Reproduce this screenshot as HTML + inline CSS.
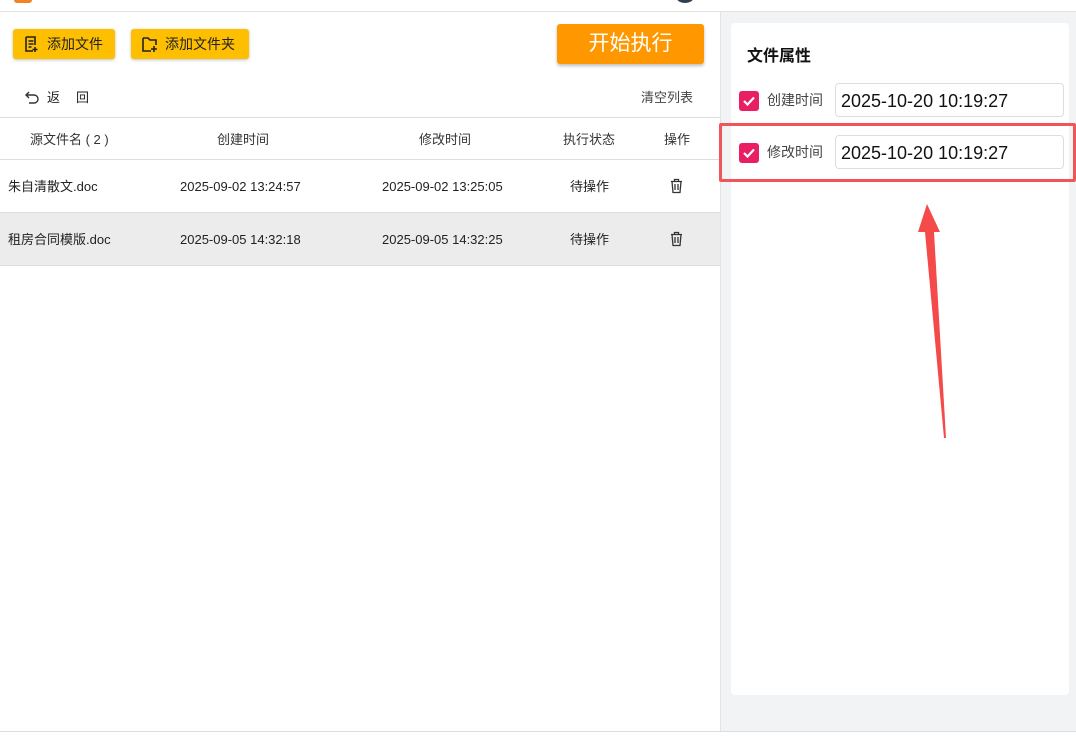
<!DOCTYPE html>
<html><head><meta charset="utf-8"><style>
*{margin:0;padding:0;box-sizing:border-box}
body{width:1076px;height:738px;background:#fff;position:relative;overflow:hidden;font-family:"Liberation Sans","Noto Sans CJK SC",sans-serif;color:#222}
.a{position:absolute;white-space:nowrap;line-height:17px}
.btn{position:absolute;background:#fdbf00;border-radius:3px;box-shadow:0 1px 3px rgba(0,0,0,.25);font-size:14px;color:#222;display:flex;align-items:center;line-height:17px}
.t{font-size:13px}
.hl{position:absolute;left:0;width:720px;height:1px;background:#ddd}
.cb{position:absolute;width:20px;height:20px;background:#e91e63;border-radius:3px}
.inp{position:absolute;left:835px;width:229px;height:34px;border:1px solid #ddd;border-radius:4px;font-size:18px;line-height:22px;padding:6px 0 0 5px;color:#111}
</style></head><body>
<div class="a" style="left:14px;top:-4px;width:18px;height:7px;background:#f58220;border-radius:3px"></div>
<div class="a" style="left:677px;top:-6px;width:16px;height:9px;background:#2c3e50;border-radius:50%"></div>
<div class="a" style="left:0;top:11px;width:1076px;height:1px;background:#e3e3e3"></div>

<div class="btn" style="left:13px;top:29px;width:102px;height:30px;padding-left:9px">
<svg width="18" height="18" viewBox="0 0 18 18" fill="none" stroke="#222" stroke-width="1.6"><path d="M4 2h9v8M4 2v14h7M6.5 6h5M6.5 9h5M6.5 12h3M13 12v5M10.5 14.5h5"/></svg><span style="margin-left:7px">添加文件</span></div>
<div class="btn" style="left:131px;top:29px;width:118px;height:30px;padding-left:10px">
<svg width="18" height="18" viewBox="0 0 18 18" fill="none" stroke="#222" stroke-width="1.6"><path d="M2 3h5l2 2h6v5M2 3v13h8M13 11v6M10 14h6"/></svg><span style="margin-left:6px">添加文件夹</span></div>

<div class="a" style="left:557px;top:24px;width:147px;height:40px;background:#ff9800;border-radius:3px;box-shadow:0 2px 3px rgba(0,0,0,.25);color:#fff;font-size:21px;text-align:center;line-height:40px">开始执行</div>

<svg class="a" style="left:24px;top:90px" width="16" height="16" viewBox="0 0 16 16" fill="none" stroke="#333" stroke-width="1.4"><path d="M5 2L2 5l3 3M2 5h8a4 4 0 010 8H5"/></svg>
<div class="a t" style="left:47px;top:89px">返</div>
<div class="a t" style="left:76px;top:89px">回</div>
<div class="a t" style="left:641px;top:89px;color:#444">清空列表</div>

<div class="hl" style="top:117px"></div>
<div class="a t" style="left:30px;top:131px;color:#333">源文件名 ( 2 )</div>
<div class="a t" style="left:217px;top:131px;color:#333">创建时间</div>
<div class="a t" style="left:419px;top:131px;color:#333">修改时间</div>
<div class="a t" style="left:563px;top:131px;color:#333">执行状态</div>
<div class="a t" style="left:664px;top:131px;color:#333">操作</div>
<div class="hl" style="top:159px"></div>

<div class="a t" style="left:8px;top:178px">朱自清散文.doc</div>
<div class="a t" style="left:180px;top:178px">2025-09-02 13:24:57</div>
<div class="a t" style="left:382px;top:178px">2025-09-02 13:25:05</div>
<div class="a t" style="left:570px;top:178px">待操作</div>
<svg class="a" style="left:669px;top:178px" width="15" height="16" viewBox="0 0 15 16" fill="none" stroke="#333" stroke-width="1.3"><path d="M2 3.5h11M5.5 3.5V1.5h4v2M3 3.5l1 11h7l1-11M6 6v6M9 6v6"/></svg>

<div class="a" style="left:0;top:212px;width:720px;height:54px;background:#ececec;border-top:1px solid #ddd;border-bottom:1px solid #ddd"></div>
<div class="a t" style="left:8px;top:231px">租房合同模版.doc</div>
<div class="a t" style="left:180px;top:231px">2025-09-05 14:32:18</div>
<div class="a t" style="left:382px;top:231px">2025-09-05 14:32:25</div>
<div class="a t" style="left:570px;top:231px">待操作</div>
<svg class="a" style="left:669px;top:231px" width="15" height="16" viewBox="0 0 15 16" fill="none" stroke="#333" stroke-width="1.3"><path d="M2 3.5h11M5.5 3.5V1.5h4v2M3 3.5l1 11h7l1-11M6 6v6M9 6v6"/></svg>

<div class="a" style="left:720px;top:12px;width:356px;height:720px;background:#f2f3f5;border-left:1px solid #e3e3e3"></div>
<div class="a" style="left:731px;top:23px;width:338px;height:672px;background:#fff;border-radius:4px"></div>
<div class="a" style="left:0;top:731px;width:1076px;height:1px;background:#ddd"></div>

<div class="a" style="left:747px;top:47px;font-size:16px;line-height:20px;font-weight:bold;color:#111">文件属性</div>
<div class="cb" style="left:739px;top:91px"><svg width="20" height="20" viewBox="0 0 20 20"><path d="M5 10l3.5 3.5L15 6.5" fill="none" stroke="#fff" stroke-width="2.2"/></svg></div>
<div class="a" style="left:767px;top:92px;font-size:14px;color:#444">创建时间</div>
<div class="inp" style="top:83px">2025-10-20 10:19:27</div>
<div class="cb" style="left:739px;top:143px"><svg width="20" height="20" viewBox="0 0 20 20"><path d="M5 10l3.5 3.5L15 6.5" fill="none" stroke="#fff" stroke-width="2.2"/></svg></div>
<div class="a" style="left:767px;top:144px;font-size:14px;color:#444">修改时间</div>
<div class="inp" style="top:135px">2025-10-20 10:19:27</div>
<div class="a" style="left:719px;top:123px;width:357px;height:59px;border:3px solid #f0555a;border-radius:2px"></div>

<svg class="a" style="left:0;top:0" width="1076" height="738"><path d="M927 204L940 232L934 232L946 438L944 438L925 232L918 232Z" fill="#f44a4a"/></svg>
</body></html>
